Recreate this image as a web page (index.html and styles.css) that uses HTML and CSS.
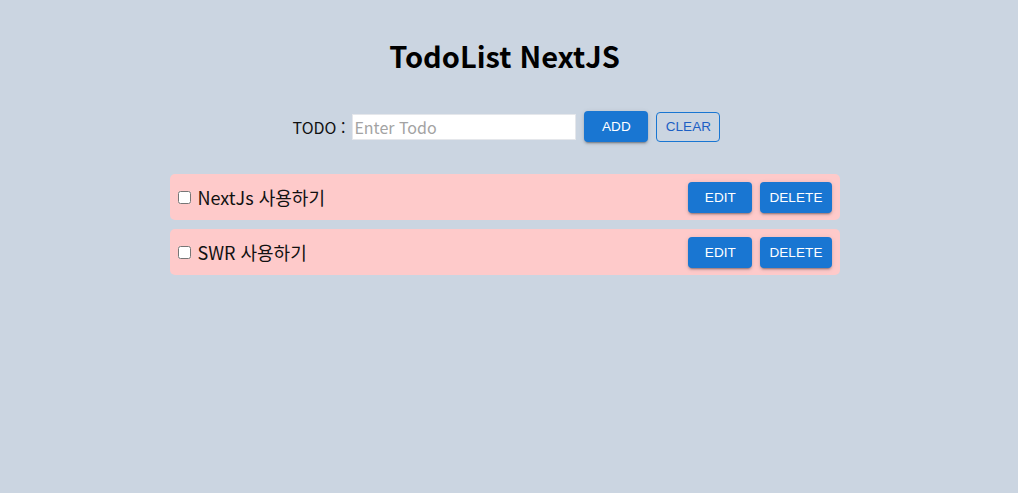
FILE: index.html
```html
<!DOCTYPE html>
<html lang="ko">
<head>
<meta charset="utf-8">
<title>TodoList NextJS</title>
<link rel="stylesheet" href="styles.css">
</head>
<body>
<main class="page">
  <h1 class="title">TodoList NextJS</h1>
  <form class="entry">
    <label class="entry-label" for="todo">TODO :</label>
    <input class="entry-input" id="todo" type="text" placeholder="Enter Todo">
    <button class="btn btn-contained" type="button">ADD</button>
    <button class="btn btn-outlined" type="button">CLEAR</button>
  </form>
  <ul class="list">
    <li class="item">
      <label class="item-main"><input class="item-check" type="checkbox"><span class="item-text">NextJs 사용하기</span></label>
      <div class="item-actions">
        <button class="btn btn-contained" type="button">EDIT</button>
        <button class="btn btn-contained" type="button">DELETE</button>
      </div>
    </li>
    <li class="item">
      <label class="item-main"><input class="item-check" type="checkbox"><span class="item-text">SWR 사용하기</span></label>
      <div class="item-actions">
        <button class="btn btn-contained" type="button">EDIT</button>
        <button class="btn btn-contained" type="button">DELETE</button>
      </div>
    </li>
  </ul>
</main>
</body>
</html>
```

FILE: styles.css
```css
html, body {
  margin: 0;
  padding: 0;
  background: #cbd5e1;
  height: 100%;
}
body {
  font-family: "Noto Sans CJK KR", "Noto Sans", sans-serif;
  color: #111;
}
.page {
  display: flex;
  flex-direction: column;
  align-items: center;
  padding-top: 33px;
  padding-right: 9px;
}
.title {
  margin: 0;
  font-size: 29px;
  line-height: 44px;
  font-weight: 700;
  color: #000;
}
.entry {
  display: flex;
  align-items: center;
  gap: 8px;
  margin-top: 34px;
  margin-left: 4px;
}
.entry-label {
  font-size: 16px;
  margin-right: -1px;
  color: #111;
}
.entry-input {
  width: 224px;
  height: 26px;
  box-sizing: border-box;
  border: 1px solid #e5e7eb;
  background: #fff;
  font-family: inherit;
  font-size: 16px;
  padding: 0 1px;
  outline: none;
}
.entry-input::placeholder {
  color: #a3a3a3;
}
.btn {
  font-family: "Liberation Sans", Arial, sans-serif;
  font-weight: 400;
  font-size: 13.5px;
  letter-spacing: 0.1px;
  line-height: 23px;
  min-width: 64px;
  padding: 4px 9px;
  border-radius: 4px;
  cursor: pointer;
  box-sizing: border-box;
}
.btn-contained {
  background: #1976d2;
  color: #fff;
  border: none;
  box-shadow: 0 3px 1px -2px rgba(0,0,0,0.2), 0 2px 2px 0 rgba(0,0,0,0.14), 0 1px 5px 0 rgba(0,0,0,0.12);
}
.btn-outlined {
  background: transparent;
  color: #1c5fc4;
  border: 1px solid #1976d2;
  padding: 2px 8px 3px;
}
.list {
  list-style: none;
  margin: 32px 0 0;
  padding: 0;
  width: 670px;
  display: flex;
  flex-direction: column;
  gap: 9px;
}
.item {
  display: flex;
  align-items: center;
  justify-content: space-between;
  height: 46px;
  box-sizing: border-box;
  background: #fecaca;
  border-radius: 5px;
  padding: 0 8px 0 8px;
}
.item-main {
  display: flex;
  align-items: center;
  gap: 7px;
}
.item-check {
  margin: 0;
  width: 13px;
  height: 13px;
}
.item-text {
  font-size: 18px;
  color: #111;
}
.item-actions {
  display: flex;
  gap: 8px;
}
```
